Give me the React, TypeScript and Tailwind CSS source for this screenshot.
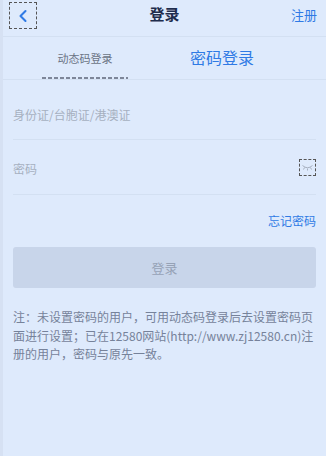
import { ChevronLeft } from "lucide-react";

export default function App() {
    return (
        <div
            className="w-[326px] h-[456px] bg-[#deeafc] border-l-[3px] border-[#d6e1f3] overflow-hidden text-[#333]"
            style={{ fontFamily: '"Noto Sans CJK SC", "Liberation Sans", sans-serif' }}
        >
            {/* header */}
            <div className="relative h-[37px] flex items-center justify-center border-b border-[#d3e0f2]">
                <div className="absolute left-[6px] top-[2px] w-[28px] h-[27px] border border-dashed border-[#555] flex items-center justify-center">
                    <ChevronLeft className="w-5 h-5 text-[#2f7ae5]" strokeWidth={2.5} />
                </div>
                <span className="text-[15px] font-bold text-[#1f2d4d] -mt-[8px]">登录</span>
                <span className="absolute right-[9px] top-[5px] text-[13px] text-[#2f7ae5]">注册</span>
            </div>

            {/* tabs */}
            <div className="relative h-[42px] flex items-center">
                <div className="w-[150px] flex justify-center relative h-full items-center">
                    <span className="text-[11px] text-[#6b7485] ml-[14px] mt-[1px]">动态码登录</span>
                    <div className="absolute left-[39px] bottom-[0px] w-[86px] h-[2px] bg-[repeating-linear-gradient(90deg,#7d8699_0_4px,transparent_4px_6px)]" />
                </div>
                <span className="text-[16px] text-[#2f7ae5] ml-[37px] -mt-[2px]">密码登录</span>
            </div>
            <div className="border-b border-[#d3e0f2]" />

            {/* form */}
            <div className="px-[10px]">
                <div className="h-[60px] flex items-center border-b border-[#d3e0f2] pt-[10px]">
                    <span className="text-[12px] text-[#a6b0c0]">身份证/台胞证/港澳证</span>
                </div>
                <div className="h-[55px] flex items-center justify-between border-b border-[#d3e0f2] pt-[3px]">
                    <span className="text-[12px] text-[#a6b0c0]">密码</span>
                    <div className="w-[17px] h-[17px] border border-dashed border-[#555] flex items-center justify-center -mt-[2px]">
                        <svg width="11" height="7" viewBox="0 0 11 7" fill="none" stroke="#a6b0c0" strokeWidth="1">
                            <path d="M0.5 1.5 Q5.5 6 10.5 1.5" />
                            <path d="M2.5 3.5 L1.5 5.5 M5.5 4.5 L5.5 6.5 M8.5 3.5 L9.5 5.5" />
                        </svg>
                    </div>
                </div>
                <div className="flex justify-end mt-[17px]">
                    <span className="text-[12px] text-[#2f7ae5]">忘记密码</span>
                </div>
                <div className="mt-[17px] h-[41px] rounded-[3px] bg-[#c8d5ea] flex items-center justify-center">
                    <span className="text-[13px] text-[#96a2b6]">登录</span>
                </div>
                <p className="mt-[20px] text-[12px] leading-[18.5px] text-[#76829a]">
                    注：未设置密码的用户，可用动态码登录后去设置密码页面进行设置；已在12580网站(http://www.zj12580.cn)注册的用户，密码与原先一致。
                </p>
            </div>
        </div>
    );
}
